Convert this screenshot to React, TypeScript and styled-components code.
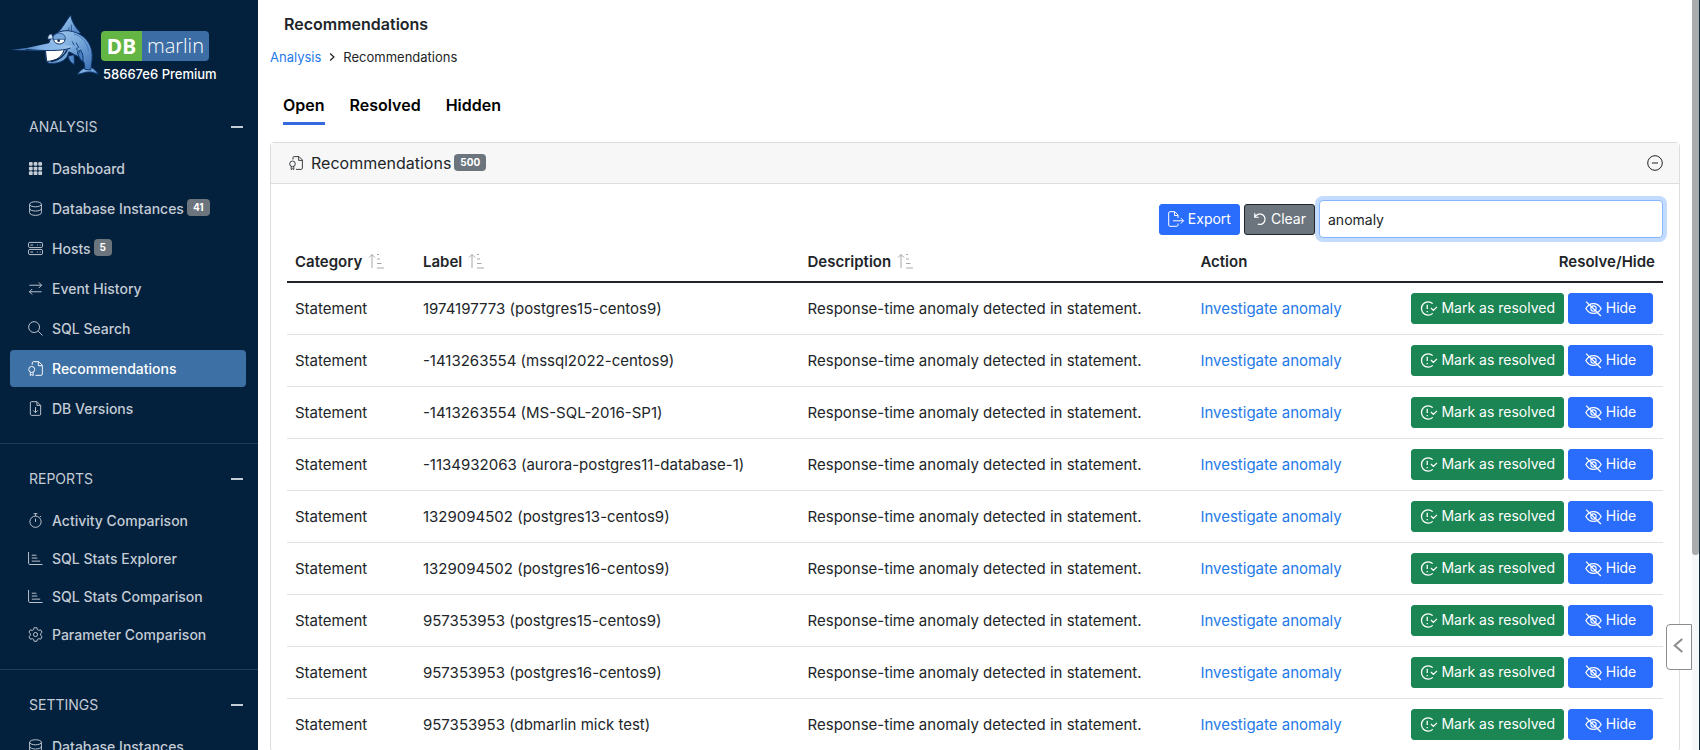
import React from "react";
import styled, { createGlobalStyle } from "styled-components";

const Global = createGlobalStyle`
  * { box-sizing: border-box; }
  body { margin: 0; font-family: Inter, "Liberation Sans", sans-serif; font-size: 15px; line-height: 24px; color: #212529; background: #fff; }
  a { color: #1f7ae8; text-decoration: none; }
  button, input { font: inherit; }
`;

const Page = styled.div`
  display: flex;
  height: 100vh;
  overflow: hidden;
`;
const Sidebar = styled.aside`
  flex: 0 0 258px;
  background: #03203c;
  color: #c4ccd6;
  overflow: hidden;
`;
const Brand = styled.div`
  display: flex;
  height: 104px;
  padding-top: 8px;
`;
const BrandText = styled.div`
  display: flex;
  flex-direction: column;
  gap: 1px;
  padding-top: 23px;
  margin-left: -9px;
`;
const Plate = styled.div`
  display: flex;
  width: 108px;
  height: 30px;
  color: #fff;
  font-size: 22px;
  line-height: 30px;
`;
const PlateDb = styled.span`
  width: 41px;
  border-radius: 4px 0 0 4px;
  background: #63b544;
  font-family: "Noto Sans", sans-serif;
  font-weight: 700;
  font-size: 21px;
  text-align: center;
`;
const PlateName = styled.span`
  flex: 1;
  border-radius: 0 4px 4px 0;
  background: #3c6ea5;
  font-family: "Open Sans", sans-serif;
  font-weight: 300;
  font-size: 20px;
  text-align: center;
`;
const Version = styled.span`
  padding-left: 2px;
  font-size: 13px;
  font-weight: 500;
  color: #fff;
  white-space: nowrap;
`;
const Section = styled.nav`
  border-bottom: 1px solid #1f3d5a;
  padding: 11px 12px 16px 10px;
  & + & { padding-top: 23px; }
`;
const SectionHead = styled.button`
  display: flex;
  width: 100%;
  justify-content: space-between;
  align-items: center;
  height: 24px;
  padding: 0 3px 0 19px;
  border: 0;
  background: none;
  color: inherit;
  font-size: 14px;
`;
const Dash = styled.span`
  width: 12px;
  height: 2px;
  background: #c4ccd6;
`;
const Items = styled.ul<{ $gap: number }>`
  display: flex;
  flex-direction: column;
  gap: ${(p) => p.$gap}px;
  margin: 11px 0 0;
  padding: 0;
  list-style: none;
`;
const Item = styled.a<{ $active?: boolean }>`
  display: flex;
  align-items: center;
  height: 37px;
  padding-left: 18px;
  border-radius: 4px;
  font-size: 14px;
  font-weight: 500;
  color: ${(p) => (p.$active ? "#fff" : "#c4ccd6")};
  background: ${(p) => (p.$active ? "#3d70a4" : "transparent")};
  svg { margin-right: 9px; }
`;
const Badge = styled.span`
  margin: 0 0 2px 3px;
  padding: 0 6px;
  border-radius: 4px;
  background: #6c757d;
  color: #fff;
  font-size: 10px;
  font-weight: 700;
  line-height: 17px;
`;

const Main = styled.main`
  flex: 1;
  min-width: 0;
  padding: 12px 12px 0;
`;
const Title = styled.h1`
  margin: 0 0 0 14px;
  font-size: 16px;
  font-weight: 600;
  line-height: 24px;
`;
const Crumbs = styled.nav`
  display: flex;
  align-items: center;
  gap: 6px;
  margin-top: 9px;
  font-size: 13px;
`;
const Tabs = styled.div`
  display: flex;
  gap: 25px;
  margin: 24px 0 17px 13px;
`;
const Tab = styled.button<{ $active?: boolean }>`
  padding: 0 0 5px;
  border: 0;
  border-bottom: 3px solid ${(p) => (p.$active ? "#3569e0" : "transparent")};
  background: none;
  color: #000;
  font-size: 16px;
  font-weight: 600;
`;
const Card = styled.section`
  border: 1px solid #dcdddf;
  border-radius: 4px;
`;
const CardHead = styled.header`
  display: flex;
  align-items: center;
  height: 41px;
  padding: 0 16px 0 18px;
  border-bottom: 1px solid #dcdddf;
  background: #f7f7f7;
`;
const CardTitle = styled.h2`
  margin: 0 0 0 8px;
  font-size: 16px;
  font-weight: 400;
`;
const Fold = styled.button`
  display: flex;
  margin-left: auto;
  padding: 0;
  border: 0;
  background: none;
  color: #212529;
`;
const Tools = styled.div`
  display: flex;
  justify-content: flex-end;
  align-items: center;
  gap: 4px;
  padding: 16px 16px 0;
`;
const tones = { blue: "#2a6cfb", green: "#1b8553", grey: "#6c757d" };
const Btn = styled.button<{ $tone: keyof typeof tones; $wide?: boolean }>`
  display: inline-flex;
  align-items: center;
  justify-content: center;
  gap: 4px;
  height: 31px;
  padding: 0 8px;
  min-width: ${(p) => (p.$wide ? 85 : 0)}px;
  border: 1px solid ${(p) => (p.$tone === "grey" ? "#212529" : tones[p.$tone])};
  border-radius: 3px;
  background: ${(p) => tones[p.$tone]};
  color: #fff;
  font-size: 14px;
  font-weight: 400;
  white-space: nowrap;
`;
const Search = styled.input`
  width: 344px;
  height: 38px;
  padding: 0 8px;
  border: 1px solid #86b7fe;
  border-radius: 4px;
  outline: 0;
  box-shadow: 0 0 0 4px #c2dbfe;
  color: #212529;
  font-size: 14px;
`;
const Table = styled.table`
  width: calc(100% - 32px);
  margin: 0 16px;
  border-collapse: collapse;
  table-layout: fixed;
  th, td { padding: 2px 8px 0; text-align: left; white-space: nowrap; }
  th { height: 44px; padding-top: 4px; border-bottom: 2px solid #212529; font-weight: 600; }
  td { height: 52px; border-bottom: 1px solid #dee2e6; }
  td:last-child { padding-top: 0; }
  th svg { margin-left: 6px; vertical-align: -2px; }
`;
const Col = styled.col<{ $w: number }>`
  width: ${(p) => p.$w}%;
`;
const RowActions = styled.div`
  display: flex;
  justify-content: flex-end;
  gap: 4px;
  padding-right: 2px;
`;
const EndTh = styled.th`
  && { text-align: right; }
`;
const Drawer = styled.button`
  position: fixed;
  right: 8px;
  top: 624px;
  display: flex;
  align-items: center;
  justify-content: center;
  width: 26px;
  height: 46px;
  padding: 0 2px 3px 0;
  border: 1px solid #8c8c8c;
  border-radius: 4px 0 0 4px;
  background: #fff;
  color: #8c8c8c;
`;
const Track = styled.div`
  flex: 0 0 8px;
  border-right: 1px solid #12293a;
  background: #f6f7f8;
`;
const Thumb = styled.div`
  height: 74%;
  border-radius: 0 0 4px 4px;
  background: #a9abac;
`;

const shapes: Record<string, React.ReactNode> = {
  grid: <g fill="currentColor" stroke="none">{[1, 6, 11].map((y) => [1, 6, 11].map((x) => <rect key={`${x}-${y}`} x={x} y={y} width="4" height="4" rx="1" />))}</g>,
  db: <><ellipse cx="8" cy="3.5" rx="6.3" ry="2.7" /><path d="M1.7 3.5v9c0 1.5 2.8 2.8 6.3 2.8s6.3-1.3 6.3-2.8v-9M1.7 8c0 1.5 2.8 2.7 6.3 2.7S14.3 9.5 14.3 8" /></>,
  hosts: <><rect x=".5" y="1.5" width="15" height="5.5" rx="1.5" /><rect x=".5" y="9" width="15" height="5.5" rx="1.5" /><path d="M9.5 4.3h1M12.500 4.300h1M9.500 11.800h1M12.500 11.800h1M2.500 4.300h3M2.500 11.800h3" /></>,
  swap: <path d="M1.500 4.500h13M11.500 1.500l3 3-3 3M14.500 11.500h-13M4.500 8.500l-3 3 3 3" />,
  search: <><circle cx="6.500" cy="6.500" r="5.800" /><path d="M10.800 10.800l4.700 4.700" /></>,
  rec: <><path d="M4.500 4V2c0-.8.6-1.300 1.300-1.300h5.700l3.800 3.800v9.500c0 .8-.6 1.300-1.300 1.300H8M11 1v4h4" /><circle cx="4" cy="9" r="3.200" /><path d="M2.500 12v3.500l1.500-1 1.500 1V12" /></>,
  down: <path d="M3.500.7h6L13.500 4.700v9.300c0 .8-.6 1.300-1.300 1.300H3.800c-.8 0-1.300-.6-1.300-1.300V2C2.500 1.200 3 .7 3.500.7zM9.500.7v4h4M8 6.500v6M5.500 10L8 12.500l2.500-2.500" />,
  timer: <><circle cx="8" cy="9.300" r="6" /><path d="M8 6v3.500M6 .7h4M8 .7v2.500M12.500 4.500l1.300-1.300" /></>,
  stats: <path d="M.6 1v12c0 .8.500 1.400 1.300 1.400H15.500M4 4.500h5M4 7.500h6M4 10.800h9" />,
  gear: <><circle cx="8" cy="8" r="2.200" /><path d="M6.500.8h3l.5 2 1.500.8 2-.6 1.500 2.600L13.500 7v2l1.500 1.400-1.500 2.600-2-.6-1.500.8-.5 2h-3l-.5-2-1.500-.8-2 .6L1 10.400 2.500 9V7L1 5.600 2.500 3l2 .6L6 2.800z" strokeLinejoin="round" /></>,
  exportDoc: <path d="M10 12.500v1.700c0 .7-.5 1.100-1.100 1.100H1.900c-.7 0-1.200-.5-1.200-1.100V1.900C.7 1.200 1.200.7 1.900.7h5L10 4v3M6.500.9V4.500H10M5 9.800h10.500M12.800 7l2.700 2.800-2.700 2.800" />,
  undo: <path d="M2 1.500v4.500h4.500M2.300 5.800A6 6 0 1 1 5.500 13.800" strokeWidth="1.400" />,
  minus: <><circle cx="8" cy="8" r="7.300" /><path d="M5 8h6" /></>,
  resolve: <path d="M12 3.400A6.300 6.300 0 1 0 12 12.600M6.800 4.500v4M6.800 10.300v1.200M10.300 7.500l2.300 2.300L16 6.500" strokeWidth="1.200" />,
  hide: <><path d="M.8 8C2.500 5 5 3.400 8 3.400S13.500 5 15.200 8C13.500 11 11 12.600 8 12.600S2.500 11 .8 8zM1 1.500l14 13.500" strokeWidth="1.200" /><circle cx="8" cy="8" r="2.500" /></>,
  sort: <path d="M4 15V1.500M1 4.500l3-3 3 3M9 1.500h2M9 6h3M9 10.500h4.500M9 15h7" />,
  right: <path d="M5 2.500L11 8l-6 5.500" strokeWidth="2" />,
  left: <path d="M12 1L4 8l8 7" strokeWidth="2.200" />,
};
const Icon = ({ name, size = 15, color = "currentColor" }: { name: string; size?: number; color?: string }) => (
  <svg width={size} height={size} viewBox="0 0 16 16" fill="none" stroke={color} strokeWidth="1" overflow="visible" aria-hidden="true">{shapes[name]}</svg>
);

const Marlin = () => (
  <svg width="110" height="80" viewBox="0 0 330 240" strokeLinejoin="round" aria-hidden="true">
    <defs>
      <linearGradient id="fish" x1="0" y1="0" x2="1" y2="1">
        <stop offset="0" stopColor="#a9cdf0" /><stop offset=".5" stopColor="#78a9dc" /><stop offset="1" stopColor="#3a6fb4" />
      </linearGradient>
      <linearGradient id="bill" x1="0" y1="0" x2="1" y2="0">
        <stop offset="0" stopColor="#1d4f96" /><stop offset=".5" stopColor="#7fb0e4" /><stop offset="1" stopColor="#9cc4ec" />
      </linearGradient>
    </defs>
    <g stroke="#0f356c" strokeWidth="3">
      <path d="M172 76C186 62 196 42 212 21C215 38 222 54 242 74L210 88Z" fill="url(#fish)" />
      <path d="M208 58L203 74M214 50L215 74" fill="none" strokeWidth="2" />
      <path d="M256 178C246 184 238 190 232 199C246 197 256 192 265 192C276 191 284 196 295 199C290 188 280 181 272 178Z" fill="url(#fish)" />
      <path d="M150 96C160 76 178 68 204 68C240 72 266 92 275 126C279 148 275 168 272 186L254 184C256 164 248 152 232 144C218 138 212 132 206 132C204 152 186 168 148 166C136 162 136 148 138 128Z" fill="url(#fish)" />
      <path d="M204 144C206 156 212 164 222 170C224 158 222 148 222 140Z" fill="#5389c8" />
      <path d="M232 132C236 146 240 154 248 162C251 148 248 136 242 126Z" fill="#487fc0" />
    </g>
    <path d="M136 124L194 121C188 143 172 160 140 160Z" fill="#fff" stroke="#0f2d58" strokeWidth="3" />
    <path d="M152 160C178 158 196 140 204 120" fill="none" stroke="#0f2d58" strokeWidth="5" />
    <path d="M30 126L80 120L146 106C168 104 190 108 214 114C216 119 214 122 208 123C180 130 120 128 30 126Z" fill="url(#bill)" />
    <path d="M76 124C130 129 186 130 212 120" fill="none" stroke="#0f356c" strokeWidth="3" />
    <path d="M144 94C142 84 148 78 155 78L160 92Z" fill="#cfe2f5" stroke="#0f356c" strokeWidth="2" />
    <ellipse cx="178" cy="94" rx="17" ry="14" fill="#fff" stroke="#0f356c" strokeWidth="3" />
    <path d="M159 94C158 76 180 70 192 81C197 86 196 92 195 94Z" fill="#76a8dd" stroke="#0f356c" strokeWidth="2" />
    <circle cx="176" cy="98" r="4" fill="#122a4a" />
    <path d="M228 104L236 118L229 122L240 136M216 100L223 112" fill="none" stroke="#1c4a86" strokeWidth="3" />
    <path d="M222 78C246 84 262 104 266 130" fill="none" stroke="#4479bb" strokeWidth="3" />
  </svg>
);

const analysis = [["grid", "Dashboard"], ["db", "Database Instances", "41"], ["hosts", "Hosts", "5"], ["swap", "Event History"], ["search", "SQL Search"], ["rec", "Recommendations"], ["down", "DB Versions"]];
const reports = [["timer", "Activity Comparison"], ["stats", "SQL Stats Explorer"], ["stats", "SQL Stats Comparison"], ["gear", "Parameter Comparison"]];
const settings = [["db", "Database Instances"]];
const labels = ["1974197773 (postgres15-centos9)", "-1413263554 (mssql2022-centos9)", "-1413263554 (MS-SQL-2016-SP1)", "-1134932063 (aurora-postgres11-database-1)", "1329094502 (postgres13-centos9)", "1329094502 (postgres16-centos9)", "957353953 (postgres15-centos9)", "957353953 (postgres16-centos9)", "957353953 (dbmarlin mick test)"];

const Group = ({ title, items, gap }: { title: string; items: string[][]; gap: number }) => (
  <Section aria-label={title}>
    <SectionHead>{title}<Dash /></SectionHead>
    <Items $gap={gap}>
      {items.map(([icon, text, count]) => (
        <li key={text}><Item href="#" $active={text === "Recommendations"}><Icon name={icon} />{text}{count && <Badge>{count}</Badge>}</Item></li>
      ))}
    </Items>
  </Section>
);

export default function App() {
  return (
    <Page>
      <Global />
      <Sidebar>
        <Brand><Marlin /><BrandText><Plate><PlateDb>DB</PlateDb><PlateName>marlin</PlateName></Plate><Version>58667e6 Premium</Version></BrandText></Brand>
        <Group title="ANALYSIS" items={analysis} gap={3} />
        <Group title="REPORTS" items={reports} gap={1} />
        <Group title="SETTINGS" items={settings} gap={1} />
      </Sidebar>
      <Main>
        <Title>Recommendations</Title>
        <Crumbs aria-label="Breadcrumb"><a href="#">Analysis</a><Icon name="right" size={10} /><span>Recommendations</span></Crumbs>
        <Tabs><Tab $active>Open</Tab><Tab>Resolved</Tab><Tab>Hidden</Tab></Tabs>
        <Card>
          <CardHead><Icon name="rec" size={14} /><CardTitle>Recommendations</CardTitle><Badge>500</Badge><Fold aria-label="Collapse"><Icon name="minus" size={16} /></Fold></CardHead>
          <Tools>
            <Btn $tone="blue"><Icon name="exportDoc" size={16} />Export</Btn>
            <Btn $tone="grey"><Icon name="undo" size={14} />Clear</Btn>
            <Search aria-label="Search" defaultValue="anomaly" />
          </Tools>
          <Table>
            <colgroup><Col $w={9.3} /><Col $w={27.95} /><Col $w={28.55} /><Col $w={15} /><Col $w={19.2} /></colgroup>
            <thead><tr><th>Category<Icon name="sort" size={16} color="#a5a8ab" /></th><th>Label<Icon name="sort" size={16} color="#a5a8ab" /></th><th>Description<Icon name="sort" size={16} color="#a5a8ab" /></th><th>Action</th><EndTh>Resolve/Hide</EndTh></tr></thead>
            <tbody>
              {labels.map((l) => (
                <tr key={l}>
                  <td>Statement</td><td>{l}</td><td>Response-time anomaly detected in statement.</td><td><a href="#">Investigate anomaly</a></td>
                  <td><RowActions><Btn $tone="green"><Icon name="resolve" size={17} />Mark as resolved</Btn><Btn $tone="blue" $wide><Icon name="hide" size={17} />Hide</Btn></RowActions></td>
                </tr>
              ))}
            </tbody>
          </Table>
        </Card>
      </Main>
      <Drawer aria-label="Open panel"><Icon name="left" size={15} /></Drawer>
      <Track><Thumb /></Track>
    </Page>
  );
}
